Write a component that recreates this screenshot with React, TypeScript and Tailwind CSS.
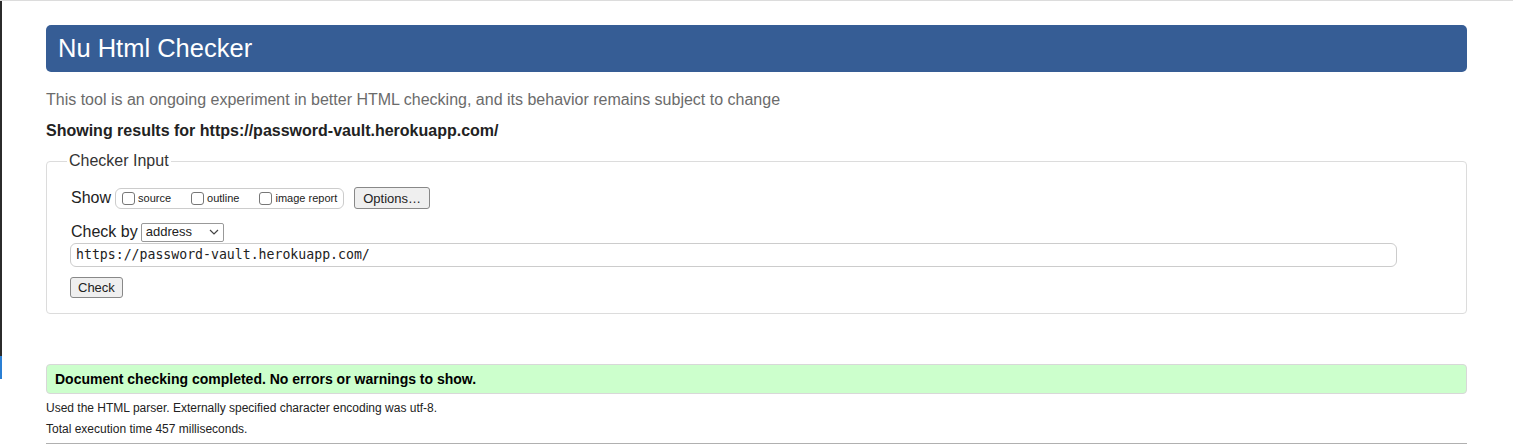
import React from "react";

const sans = { fontFamily: '"Liberation Sans", Arial, sans-serif' };

const Check = ({ label }: { label: string }) => (
  <label className="flex items-center gap-[3px] text-[11px] text-[#222]">
    <span className="inline-block h-[13px] w-[13px] rounded-[3px] border border-[#777] bg-white" />
    {label}
  </label>
);

export default function App() {
  return (
    <div className="relative min-h-[448px] w-full border-t border-[#dcdcdc] bg-white text-[#222]" style={sans}>
      {/* window edge artifact */}
      <div className="absolute left-0 top-0 h-[355px] w-[2px] bg-[#2b2b2b]" />
      <div className="absolute left-0 top-[355px] h-[23px] w-[2px] bg-[#2a7fd4]" />

      <div className="px-[46px] pt-6">
        <h1 className="flex h-[47px] items-center rounded-[5px] bg-[#365d95] pl-3 text-[25.5px] leading-none text-white">
          Nu Html Checker
        </h1>

        <p className="mt-[19px] text-[16px] leading-[18px] text-[#6b6b6b]">
          This tool is an ongoing experiment in better HTML checking, and its behavior remains subject to change
        </p>

        <p className="mt-[13px] text-[16px] font-bold leading-[18px] text-[#222]">
          Showing results for https://password-vault.herokuapp.com/
        </p>

        <fieldset className="mt-[12px] rounded-[4px] border border-[#dcdcdc] px-6 pb-[14px] pt-[16px]">
          <legend className="ml-[-4px] px-[2px] text-[16px] leading-[18px] text-[#333]">Checker Input</legend>

          <div className="flex items-center">
            <span className="text-[16px] leading-[24px]">Show</span>
            <div className="ml-[4px] flex h-[21px] items-center gap-[10px] rounded-[6px] border border-[#ccc] px-[6px]">
              <Check label="source" />
              <span className="w-0" />
              <Check label="outline" />
              <span className="w-0" />
              <Check label="image report" />
            </div>
            <button className="ml-[10px] h-[22px] rounded-[3px] border border-[#888] bg-[#efefef] px-[8px] text-[13px] leading-none">
              Options…
            </button>
          </div>

          <div className="mt-[11px] flex items-center">
            <span className="text-[16px] leading-[22px]">Check by</span>
            <div className="ml-[3px] flex h-[19px] w-[83px] items-center justify-between rounded-[2px] border border-[#999] bg-white pl-[4px] pr-[4px] text-[13px]">
              address
              <svg width="10" height="6" viewBox="0 0 10 6" fill="none" stroke="#444" strokeWidth="1.2">
                <path d="M1 1l4 4 4-4" />
              </svg>
            </div>
          </div>

          <div
            className="-ml-px mt-0 flex h-[24px] w-[1327px] items-center rounded-[6px] border border-[#ccc] px-[5px] text-[13.2px] text-[#222]"
            style={{ fontFamily: '"DejaVu Sans Mono", "Liberation Mono", monospace' }}
          >
            https://password-vault.herokuapp.com/
          </div>

          <button className="-ml-px mt-[10px] h-[21px] rounded-[3px] border border-[#888] bg-[#efefef] px-[7px] text-[13px] leading-none">
            Check
          </button>
        </fieldset>

        <div className="mt-[50px] flex h-[30px] items-center rounded-[4px] border border-[#d8d8d8] bg-[#ccffcc] pl-2 text-[14px] font-bold text-black">
          Document checking completed. No errors or warnings to show.
        </div>

        <p className="mt-[7px] text-[12px] leading-[14px] text-[#222]">
          Used the HTML parser. Externally specified character encoding was utf-8.
        </p>
        <p className="mt-[7px] text-[12px] leading-[14px] text-[#222]">Total execution time 457 milliseconds.</p>

        <hr className="mt-[7px] border-t border-[#b0b0b0]" />
      </div>
    </div>
  );
}
